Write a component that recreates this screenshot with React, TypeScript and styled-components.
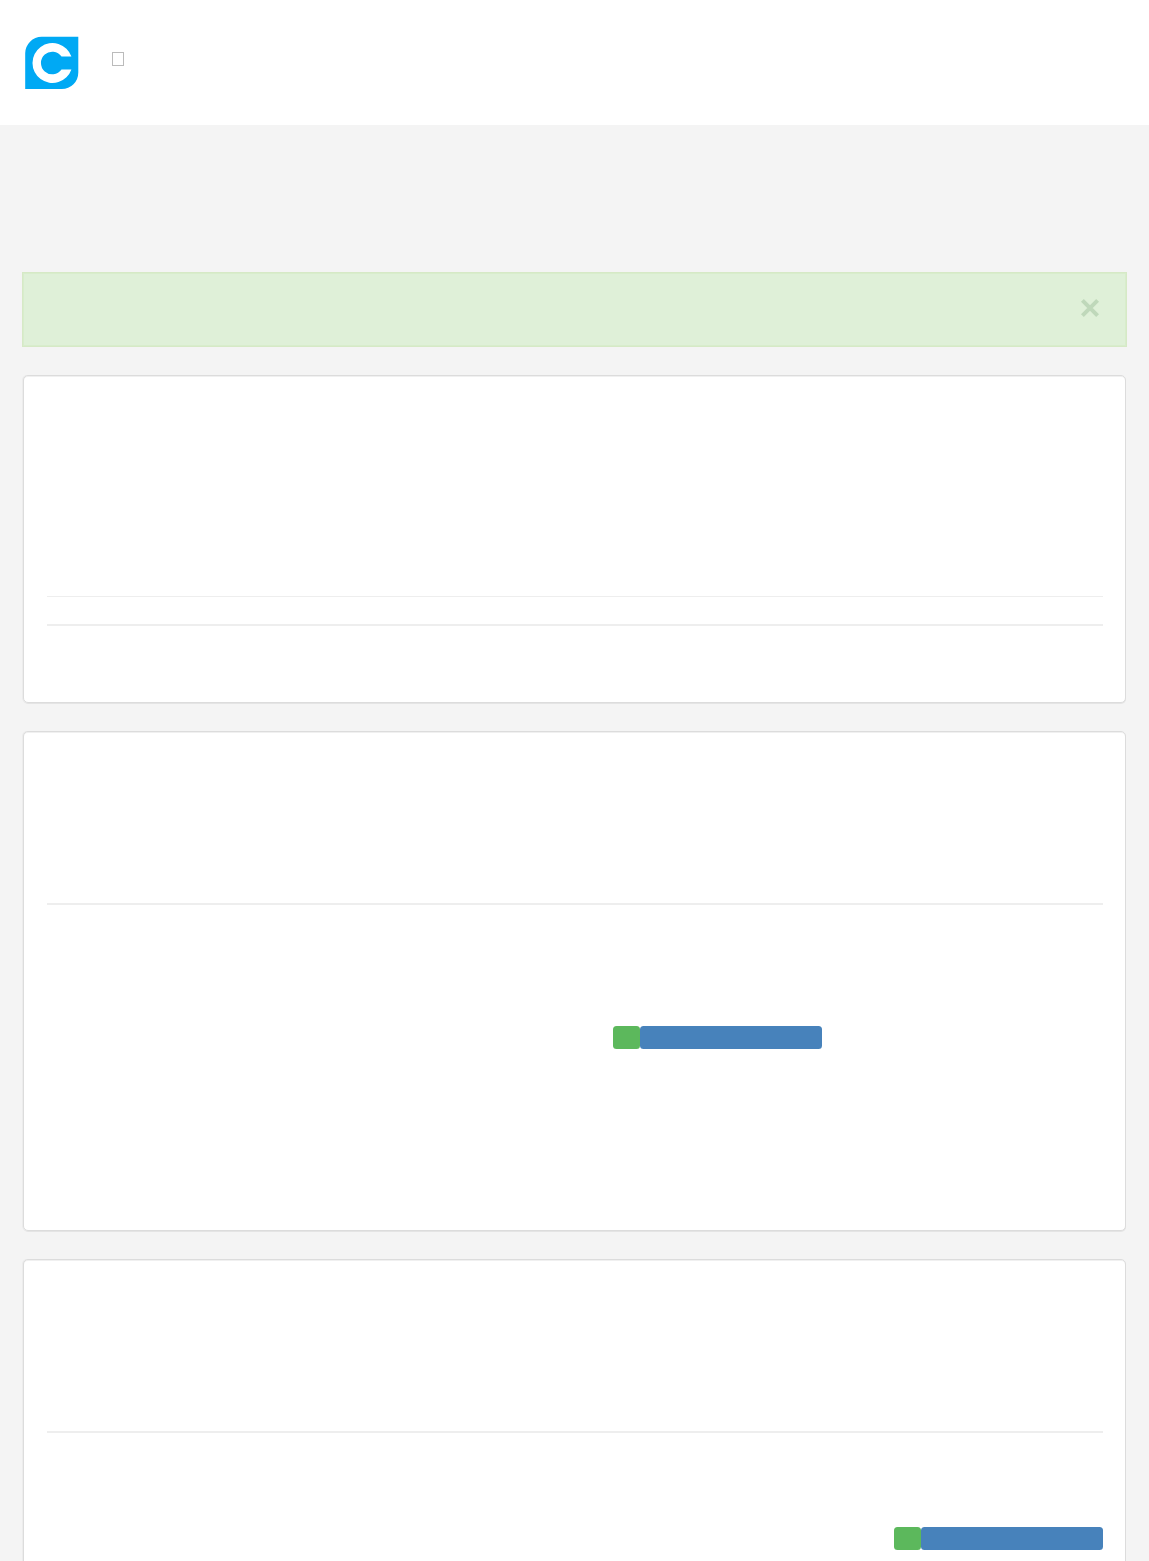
import React from "react";
import styled, { createGlobalStyle } from "styled-components";

const Global = createGlobalStyle`
  * { box-sizing: border-box; }
  body { margin: 0; background: #f4f4f4; font-family: "Liberation Sans", Arial, sans-serif; overflow: hidden; }
`;
const Page = styled.div`
  height: 1561px;
  overflow: hidden;
  background: #f4f4f4;
`;
const Header = styled.header`
  height: 125px;
  padding: 36px 24px 0;
  display: flex;
  align-items: flex-start;
  background: #fff;
`;
const Logo = styled.svg`
  width: 56px;
  height: 54px;
  display: block;
`;
const MenuGlyph = styled.span`
  width: 12px;
  height: 14px;
  margin: 16px 0 0 32px;
  border: 1px solid #bbb;
`;
const Main = styled.main`
  padding: 147px 23px 0;
`;
const Alert = styled.div`
  height: 75px;
  margin: 0 -1px 28px;
  padding: 0 26px 3px 0;
  display: flex;
  align-items: center;
  justify-content: flex-end;
  border: 1px solid #d6e9c6;
  box-shadow: inset 0 0 0 1px #d8edcc;
  background: #dff0d8;
`;
const Close = styled.button`
  width: 20px;
  height: 20px;
  padding: 0;
  border: 0;
  background: none;
  svg { display: block; }
`;
const Card = styled.section<{ $height: number; $gap?: number }>`
  height: ${(p) => p.$height}px;
  margin-bottom: ${(p) => p.$gap ?? 28}px;
  padding: 0 22px 0 23px;
  border: 1px solid #dcdcdc;
  border-radius: 5px;
  box-shadow: -1px 0 0 #ececec, 0 1px 0 #e4e4e4, inset 0 1px 0 #f0f0f0;
  background: #fff;
  overflow: hidden;
`;
const Rule = styled.hr<{ $gap: number; $thick?: number }>`
  height: ${(p) => p.$thick ?? 2}px;
  margin: ${(p) => p.$gap}px 0 0;
  border: 0;
  background: #eee;
`;
const Labels = styled.div<{ $gap: number; $indent: number }>`
  display: flex;
  margin: ${(p) => p.$gap}px 0 0 ${(p) => p.$indent}px;
`;
const Label = styled.span<{ $width: number; $color: string }>`
  width: ${(p) => p.$width}px;
  height: 22.7px;
  border-radius: 3.5px;
  background: ${(p) => p.$color};
`;

function StatusLabels({ gap, indent }: { gap: number; indent: number }) {
  return (
    <Labels $gap={gap} $indent={indent}>
      <Label $width={27} $color="#5cb85c" />
      <Label $width={182} $color="#4782bb" />
    </Labels>
  );
}

export default function App() {
  return (
    <>
      <Global />
      <Page>
        <Header>
          <Logo viewBox="0 0 56 54">
            <path d="M17.5 .8H54.3V36.6A16.5 16.5 0 0 1 37.8 53.1H1.2V17.3A16.5 16.5 0 0 1 17.7 .8Z" fill="#00a9f4" />
            <path d="M47.4 20.5A20 20 0 1 0 47.4 33.5H37.5A11.3 11.3 0 1 1 37.5 20.5Z" fill="#fff" />
          </Logo>
          <MenuGlyph />
        </Header>
        <Main>
          <Alert>
            <Close aria-label="Close">
              <svg width="20" height="20" viewBox="0 0 20 20">
                <path d="M2.4 2.4L17.6 17.6M17.6 2.4L2.4 17.6" stroke="#bfd8ba" strokeWidth="4" />
              </svg>
            </Close>
          </Alert>
          <Card $height={328}>
            <Rule $gap={220} $thick={1} />
            <Rule $gap={27} />
          </Card>
          <Card $height={500}>
            <Rule $gap={171} />
            <StatusLabels gap={121} indent={566} />
          </Card>
          <Card $height={400}>
            <Rule $gap={171} />
            <StatusLabels gap={94} indent={847} />
          </Card>
        </Main>
      </Page>
    </>
  );
}
